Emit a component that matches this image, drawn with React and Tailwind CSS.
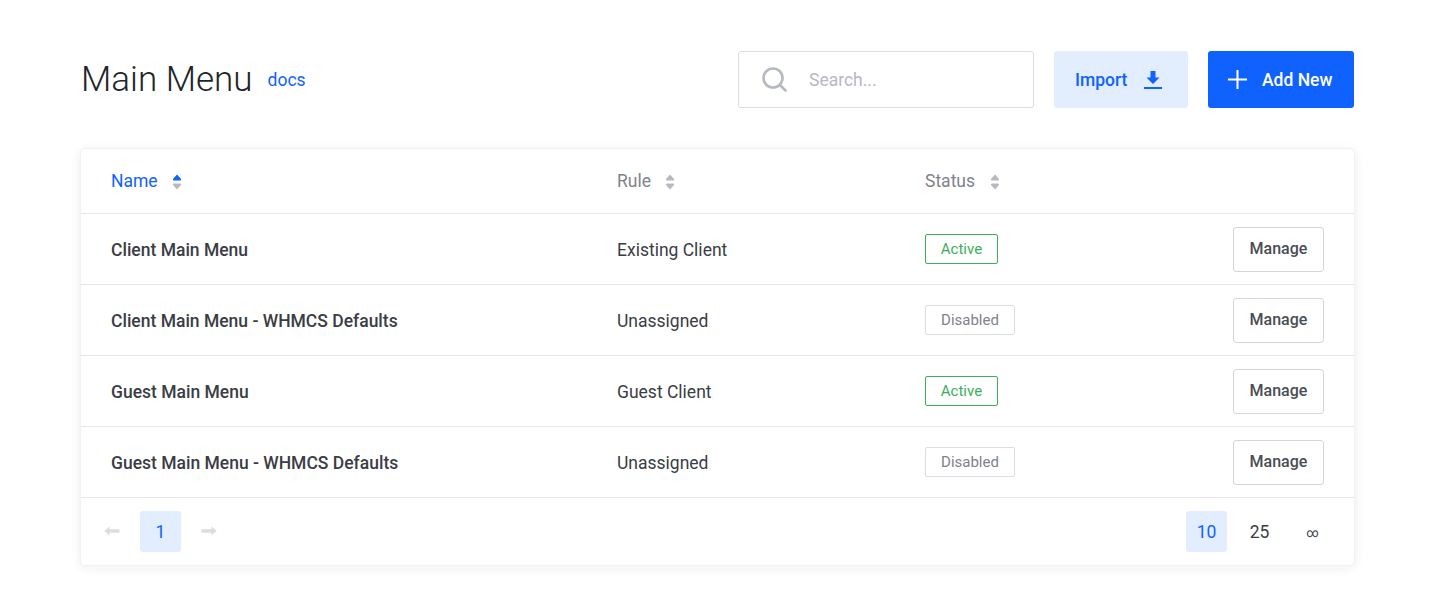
import React from 'react';

const rows = [
  { name: 'Client Main Menu', rule: 'Existing Client', active: true },
  { name: 'Client Main Menu - WHMCS Defaults', rule: 'Unassigned', active: false },
  { name: 'Guest Main Menu', rule: 'Guest Client', active: true },
  { name: 'Guest Main Menu - WHMCS Defaults', rule: 'Unassigned', active: false },
];

function SortIcon({ active }) {
  return (
    <svg width="10" height="16" viewBox="0 0 10 16" className="ml-[14.5px] mt-px">
      <path d="M5 0.5 L9 5 Q9.5 6.5 8 6.5 L2 6.5 Q0.5 6.5 1 5 Z" fill={active ? '#1062fe' : '#b6b9c2'} />
      <path d="M5 15.5 L9 11 Q9.5 9.5 8 9.5 L2 9.5 Q0.5 9.5 1 11 Z" fill="#b6b9c2" />
    </svg>
  );
}

function Arrow({ right }) {
  return (
    <svg width="16" height="10" viewBox="0 0 16 10" className={right ? 'mb-[2px]' : 'rotate-180 mb-[2px]'}>
      <path d="M0.5 3.2 H10.5 V0.6 L15.7 5 L10.5 9.4 V6.8 H0.5 Z" fill="#dcdde1" />
    </svg>
  );
}

function App() {
  return (
    <main className="min-h-screen bg-white pl-[81px] pr-[83px] pt-[51px] font-['Roboto',sans-serif]">
      <div className="flex items-center h-[57px]">
        <h1 className="text-[35px] font-light leading-[57px] text-[#212529]">Main Menu</h1>
        <a className="ml-[15px] mt-[1px] text-[17.5px] text-[#1062fe]">docs</a>

        <div className="ml-auto flex items-center w-[296px] h-[57px] border border-[#dcdde1] rounded-[3px] bg-white pl-[23px]">
          <svg width="25" height="25" viewBox="0 0 25 25" fill="none" stroke="#b6b9c2" strokeWidth="2.6">
            <circle cx="11" cy="11" r="9.5" />
            <path d="M18 18 L23.5 23.5" strokeLinecap="round" />
          </svg>
          <span className="ml-[22px] mt-[2px] text-[17.5px] text-[#b6b9c2]">Search...</span>
        </div>

        <button className="ml-[20px] flex items-center h-[57px] w-[134px] pl-[21px] rounded-[3px] bg-[#e2edfd] text-[#1062fe] text-[17.5px] font-medium">
          <span className="mt-[2px]">Import</span>
          <svg width="18" height="18" viewBox="0 0 18 18" className="ml-[17px]" fill="#1062fe">
            <path d="M6.5 0 H11.5 V6.5 H15.5 L9 13 L2.5 6.5 H6.5 Z" />
            <rect x="0" y="16" width="18" height="2" />
          </svg>
        </button>

        <button className="ml-[20px] flex items-center h-[57px] w-[146px] pl-[20px] rounded-[3px] bg-[#1062fe] text-white text-[17.5px] font-medium">
          <svg width="19" height="19" viewBox="0 0 19 19" stroke="#fff" strokeWidth="2">
            <path d="M9.5 0 V19 M0 9.5 H19" />
          </svg>
          <span className="ml-[15px] mt-[2px]">Add New</span>
        </button>
      </div>

      <div className="mt-[40px] bg-white rounded-[5px] border border-[#f2f2f4] shadow-[0_2px_12px_rgba(30,35,50,0.07)] -mx-px">
        <div className="flex items-center h-[65px] px-[30px] border-b border-[#e5e6e9] text-[17.5px]">
          <div className="w-[506px] flex items-center text-[#1062fe]">Name<SortIcon active /></div>
          <div className="w-[308px] flex items-center text-[#7f828c]">Rule<SortIcon /></div>
          <div className="flex items-center text-[#7f828c]">Status<SortIcon /></div>
        </div>

        {rows.map((row) => (
          <div key={row.name} className="flex items-center h-[71px] px-[30px] border-b border-[#e5e6e9]">
            <div className="w-[506px] mt-[2px] text-[17.5px] font-medium text-[#3a3d44]">{row.name}</div>
            <div className="w-[308px] mt-[2px] text-[17.5px] text-[#3a3d44]">{row.rule}</div>
            <div>
              {row.active ? (
                <span className="flex items-center justify-center w-[73px] h-[30px] mb-[1px] pt-[1px] border border-[#3dae5a] rounded-[2px] text-[15px] text-[#3dae5a]">Active</span>
              ) : (
                <span className="flex items-center justify-center w-[90px] h-[30px] mb-[1px] pt-[1px] border border-[#dcdde1] rounded-[2px] text-[15px] text-[#7f828c]">Disabled</span>
              )}
            </div>
            <button className="ml-auto w-[91px] h-[45px] bg-white border border-[#d5d6da] rounded-[3px] text-[16px] font-medium text-[#4a4d54]">Manage</button>
          </div>
        ))}

        <div className="flex items-center h-[67px] px-[23px]">
          <Arrow />
          <span className="ml-[20px] flex items-center justify-center w-[41px] h-[41px] pt-[2px] rounded-[3px] bg-[#e2edfd] text-[#1062fe] text-[17.5px]">1</span>
          <span className="ml-[20px] flex"><Arrow right /></span>
          <div className="ml-auto flex items-center mr-[-2px]">
            <span className="flex items-center justify-center w-[41px] h-[41px] pt-[2px] rounded-[3px] bg-[#e2edfd] text-[#1062fe] text-[17.5px]">10</span>
            <span className="ml-[12px] flex items-center justify-center w-[41px] h-[41px] pt-[2px] text-[#3a3d44] text-[17.5px]">25</span>
            <span className="ml-[12px] flex items-center justify-center w-[41px] h-[41px] pt-[2px] text-[#3a3d44] text-[12px]">∞</span>
          </div>
        </div>
      </div>
    </main>
  );
}

export default App;
